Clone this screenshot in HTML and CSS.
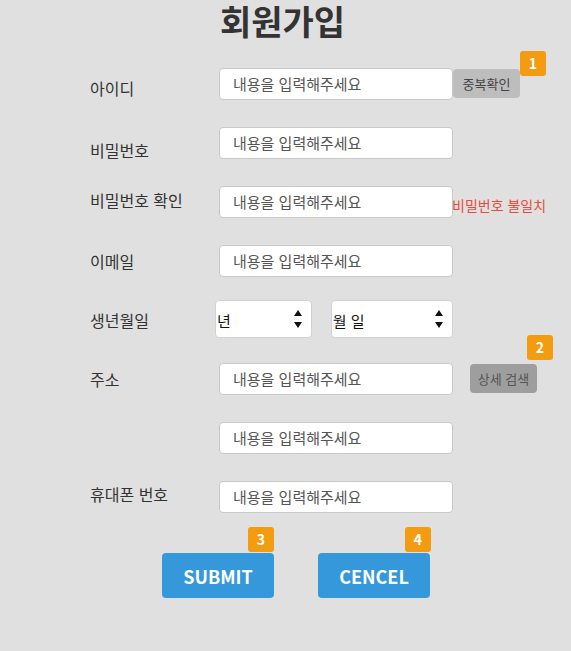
FILE: index.html
```html
<!DOCTYPE html>
<html lang="ko">
<head>
<meta charset="utf-8">
<title>회원가입</title>
<link rel="stylesheet" href="styles.css">
</head>
<body>
<main class="page">
  <h1 class="title">회원가입</h1>
  <form class="form">
    <label class="label label--id">아이디</label>
    <input class="field" type="text" placeholder="내용을 입력해주세요">
    <div class="extra">
      <button type="button" class="btn-check">중복확인<span class="badge badge--1">1</span></button>
    </div>

    <label class="label label--pw">비밀번호</label>
    <input class="field" type="password" placeholder="내용을 입력해주세요">
    <div class="extra"></div>

    <label class="label label--pw2">비밀번호 확인</label>
    <input class="field" type="password" placeholder="내용을 입력해주세요">
    <div class="extra"><span class="error">비밀번호 불일치</span></div>

    <label class="label">이메일</label>
    <input class="field" type="text" placeholder="내용을 입력해주세요">
    <div class="extra"></div>

    <label class="label label--birth">생년월일</label>
    <div class="birth">
      <div class="select select--year"><span>년</span>
        <svg class="spin" width="8" height="18" viewBox="0 0 8 18"><path d="M4 0 L8 6 L0 6 Z M0 12 L8 12 L4 18 Z" fill="#111"/></svg>
      </div>
      <div class="select select--md"><span>월 일</span>
        <svg class="spin" width="8" height="18" viewBox="0 0 8 18"><path d="M4 0 L8 6 L0 6 Z M0 12 L8 12 L4 18 Z" fill="#111"/></svg>
      </div>
    </div>
    <div class="extra"></div>

    <label class="label">주소</label>
    <input class="field" type="text" placeholder="내용을 입력해주세요">
    <div class="extra">
      <button type="button" class="btn-search">상세 검색<span class="badge badge--2">2</span></button>
    </div>

    <span class="label"></span>
    <input class="field" type="text" placeholder="내용을 입력해주세요">
    <div class="extra"></div>

    <label class="label label--phone">휴대폰 번호</label>
    <input class="field" type="text" placeholder="내용을 입력해주세요">
    <div class="extra"></div>
  </form>
  <div class="actions">
    <button type="button" class="btn-main">SUBMIT<span class="badge badge--3">3</span></button>
    <button type="button" class="btn-main">CENCEL<span class="badge badge--4">4</span></button>
  </div>
</main>
</body>
</html>
```
FILE: styles.css
```css
* { box-sizing: border-box; }
html, body {
  margin: 0;
  padding: 0;
  background: #e0e0e0;
}
body {
  font-family: "Noto Sans CJK KR", "Noto Sans", sans-serif;
  color: #333;
  width: 571px;
  height: 651px;
}
.title {
  margin: 0;
  height: 54px;
  font-size: 34px;
  font-weight: 700;
  line-height: 42px;
  text-align: center;
  color: #333;
  padding-right: 6px;
}
.form {
  display: grid;
  grid-template-columns: 129px 234px 1fr;
  grid-auto-rows: 59px;
  align-items: center;
  margin-left: 90px;
  margin-top: 0;
}
.label {
  font-size: 16px;
  color: #333;
  line-height: 20px;
}
.label--id { padding-top: 8px; }
.label--pw { padding-top: 14px; }
.label--pw2 { padding-bottom: 4px; }
.label--phone { padding-bottom: 6px; }
.field {
  width: 234px;
  height: 32px;
  border: 1px solid #c8c8c8;
  border-radius: 4px;
  background: #fff;
  padding: 0 0 0 13px;
  font-family: inherit;
  font-size: 15px;
  color: #555;
  outline: none;
}
.field::placeholder { color: #555; }
.extra {
  height: 100%;
  display: flex;
  align-items: center;
}
.btn-check {
  position: relative;
  height: 29px;
  width: 67px;
  border: none;
  border-radius: 4px;
  background: #bdbdbd;
  color: #444;
  font-family: inherit;
  font-size: 13px;
  padding: 0;
  margin-top: -1px;
}
.error {
  color: #e74c3c;
  font-size: 14px;
  margin-top: 6px;
  margin-left: -1px;
}
.birth {
  display: flex;
  gap: 19px;
  margin-left: -4px;
  margin-top: -2px;
}
.select {
  height: 38px;
  background: #fff;
  border: 1px solid #d2d2d2;
  border-radius: 4px;
  display: flex;
  align-items: center;
  justify-content: space-between;
  padding: 4px 9px 0 1px;
  font-size: 15px;
  color: #111;
}
.select--year { width: 98px; }
.select--md { width: 124px; }
.spin { display: block; margin-top: -4px; }
.btn-search {
  position: relative;
  height: 29px;
  width: 67px;
  margin-left: 17px;
  border: none;
  border-radius: 4px;
  background: #9e9e9e;
  color: #555;
  font-family: inherit;
  font-size: 13px;
  padding: 0;
}
.badge {
  position: absolute;
  width: 26px;
  height: 25px;
  border-radius: 3px;
  background: #f39c12;
  color: #fff;
  font-size: 14px;
  font-weight: 700;
  line-height: 25px;
  text-align: center;
}
.badge--1 { left: 67px; top: -18px; }
.badge--2 { right: -16px; top: -29px; }
.badge--3 { right: 0; top: -26px; }
.badge--4 { right: -1px; top: -26px; }
.actions {
  display: flex;
  gap: 44px;
  margin-left: 162px;
  margin-top: 27px;
}
.btn-main {
  position: relative;
  width: 112px;
  height: 45px;
  border: none;
  border-radius: 4px;
  background: #3498db;
  color: #fff;
  font-family: inherit;
  font-size: 18px;
  font-weight: 700;
  padding: 0;
}
```
